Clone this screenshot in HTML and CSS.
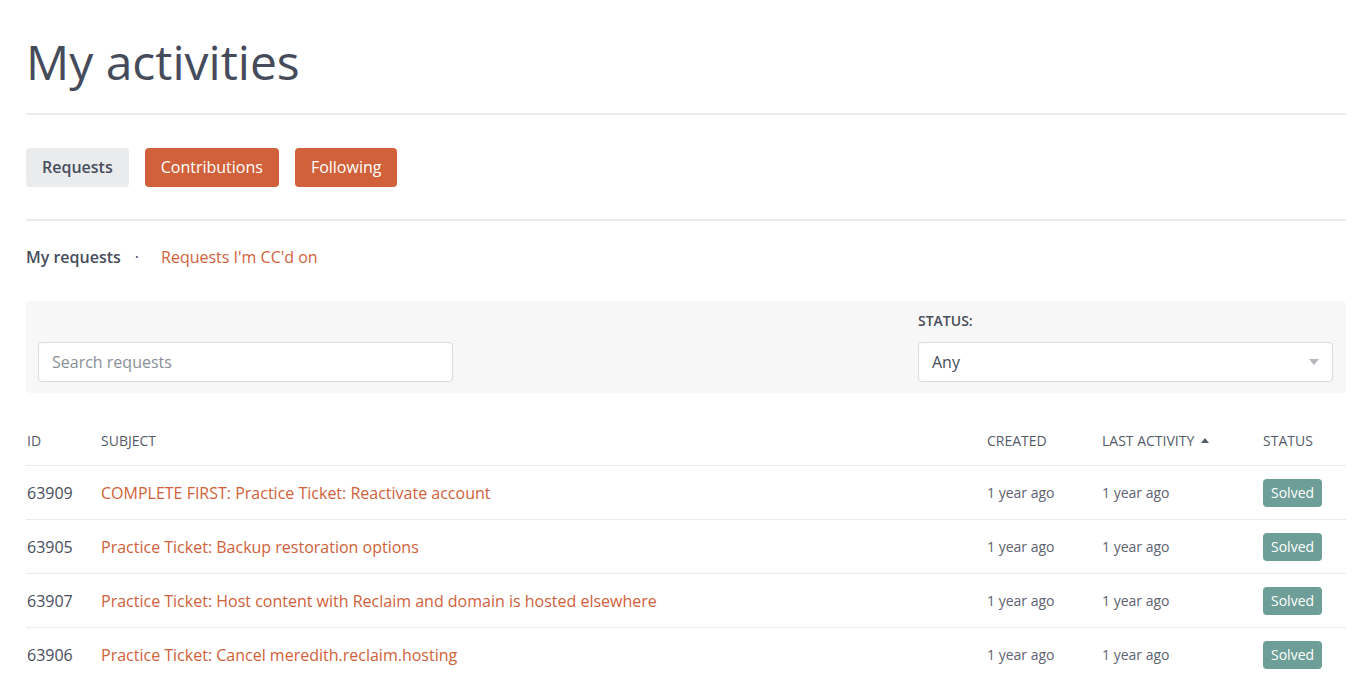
FILE: index.html
```html
<!DOCTYPE html>
<html lang="en">
<head>
<meta charset="utf-8">
<title>My activities</title>
<link rel="stylesheet" href="styles.css">
</head>
<body>
<main class="page">
  <header class="page-header">
    <h1 class="title">My activities</h1>
  </header>

  <nav class="tabs">
    <a class="tab tab-current">Requests</a>
    <a class="tab tab-link">Contributions</a>
    <a class="tab tab-link">Following</a>
  </nav>

  <nav class="subnav">
    <span class="subnav-current">My requests</span>
    <span class="subnav-dot">·</span>
    <a class="subnav-link">Requests I'm CC'd on</a>
  </nav>

  <section class="filters">
    <div class="filter-search">
      <div class="input">Search requests</div>
    </div>
    <div></div>
    <div class="filter-status">
      <label class="filter-label">Status:</label>
      <div class="select">
        <span>Any</span>
        <svg class="select-caret" width="10" height="6" viewBox="0 0 10 6"><path d="M0 0h10L5 6z" fill="#b5b8bd"/></svg>
      </div>
    </div>
  </section>

  <table class="requests">
    <colgroup>
      <col class="c-id"><col><col class="c-created"><col class="c-last"><col class="c-status">
    </colgroup>
    <thead>
      <tr>
        <th>ID</th>
        <th>Subject</th>
        <th>Created</th>
        <th class="th-sorted">Last activity <svg class="sort-caret" width="8" height="5" viewBox="0 0 8 5"><path d="M0 5L4 0l4 5z" fill="#555b6a"/></svg></th>
        <th>Status</th>
      </tr>
    </thead>
    <tbody>
      <tr>
        <td class="id">63909</td>
        <td><a class="subject">COMPLETE FIRST: Practice Ticket: Reactivate account</a></td>
        <td class="date">1 year ago</td>
        <td class="date">1 year ago</td>
        <td><span class="badge">Solved</span></td>
      </tr>
      <tr>
        <td class="id">63905</td>
        <td><a class="subject">Practice Ticket: Backup restoration options</a></td>
        <td class="date">1 year ago</td>
        <td class="date">1 year ago</td>
        <td><span class="badge">Solved</span></td>
      </tr>
      <tr>
        <td class="id">63907</td>
        <td><a class="subject">Practice Ticket: Host content with Reclaim and domain is hosted elsewhere</a></td>
        <td class="date">1 year ago</td>
        <td class="date">1 year ago</td>
        <td><span class="badge">Solved</span></td>
      </tr>
      <tr>
        <td class="id">63906</td>
        <td><a class="subject">Practice Ticket: Cancel meredith.reclaim.hosting</a></td>
        <td class="date">1 year ago</td>
        <td class="date">1 year ago</td>
        <td><span class="badge">Solved</span></td>
      </tr>
    </tbody>
  </table>
</main>
</body>
</html>
```

FILE: styles.css
```css
* { box-sizing: border-box; }

html, body {
  margin: 0;
  padding: 0;
  background: #ffffff;
}

body {
  font-family: "Open Sans", "Noto Sans", sans-serif;
  color: #474d5c;
  font-size: 16px;
}

.page {
  width: 1320px;
  margin-left: 26px;
}

.page-header {
  border-bottom: 2px solid #ebebeb;
  padding-bottom: 21px;
}

.title {
  margin: 0;
  padding-top: 32px;
  font-size: 48px;
  line-height: 60px;
  font-weight: 400;
  color: #454b5a;
}

.tabs {
  display: flex;
  gap: 16px;
  padding: 33px 0 32px;
  border-bottom: 2px solid #ebebeb;
}

.tab {
  display: inline-flex;
  align-items: center;
  height: 39px;
  padding: 0 16px;
  border-radius: 4px;
  font-size: 16px;
  line-height: 21px;
}

.tab-current {
  background: #e9ebed;
  color: #474d5c;
  font-weight: 600;
}

.tab-link {
  background: #d0613a;
  color: #ffffff;
}

.subnav {
  display: flex;
  align-items: flex-start;
  padding-top: 26px;
  height: 80px;
  font-size: 16px;
  line-height: 21px;
}

.subnav-current {
  font-weight: 600;
  color: #474d5c;
}

.subnav-dot {
  margin: 0 22px 0 14px;
  color: #474d5c;
}

.subnav-link {
  color: #d0613a;
}

.filters {
  display: grid;
  grid-template-columns: 415px 1fr 415px;
  align-items: end;
  background: #f7f7f7;
  border-radius: 4px;
  padding: 12px 13px 12px 12px;
  height: 92px;
}

.filter-label {
  display: block;
  font-size: 14px;
  line-height: 16px;
  font-weight: 600;
  text-transform: uppercase;
  color: #474d5c;
  margin-bottom: 13px;
}

.input,
.select {
  height: 40px;
  background: #ffffff;
  border: 1px solid #d8dcde;
  border-radius: 4px;
  display: flex;
  align-items: center;
  padding: 0 13px;
  font-size: 16px;
}

.input {
  color: #8a8f98;
}

.select {
  justify-content: space-between;
  color: #474d5c;
}

.requests {
  width: 100%;
  border-collapse: collapse;
  table-layout: fixed;
  margin-top: 24px;
}

.c-id { width: 74px; }
.c-created { width: 115px; }
.c-last { width: 161px; }
.c-status { width: 84px; }

.requests th {
  text-align: left;
  font-size: 14px;
  font-weight: 400;
  text-transform: uppercase;
  color: #555b6a;
  height: 48px;
  padding: 0 0 0 1px;
  border-bottom: 1px solid #e9ebed;
  vertical-align: middle;
}

.th-sorted .sort-caret {
  margin-left: 3px;
  vertical-align: 3px;
}

.requests td {
  height: 54px;
  padding: 1px 0 0 1px;
  border-bottom: 1px solid #e9ebed;
  vertical-align: middle;
  white-space: nowrap;
}

.id {
  font-size: 16px;
  color: #474d5c;
}

.subject {
  color: #d0613a;
  font-size: 16px;
}

.date {
  font-size: 14px;
  color: #5d6270;
}

.badge {
  display: inline-flex;
  align-items: center;
  height: 28px;
  padding: 0 8px;
  border-radius: 4px;
  background: #6d9e97;
  color: #ffffff;
  font-size: 14px;
}
```
